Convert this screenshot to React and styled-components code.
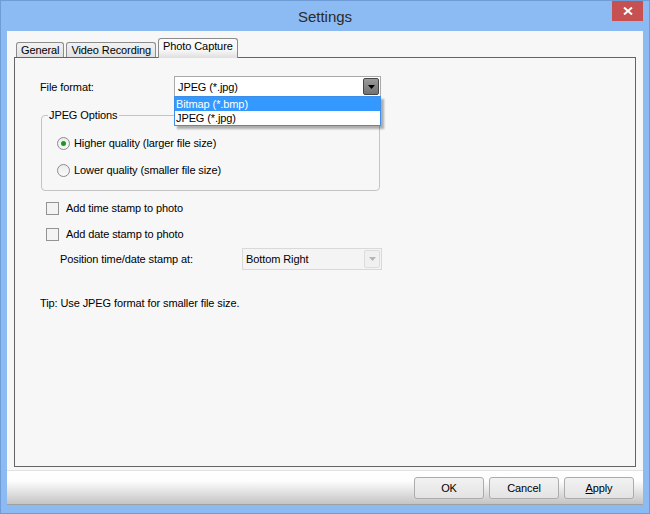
import React from 'react';
import styled, {createGlobalStyle, css} from 'styled-components';

const GlobalStyle = createGlobalStyle`
    html, body {
        margin: 0;
        padding: 0;
        background: #8cbaf3;
    }
    body {
        font-family: "Liberation Sans", Arial, sans-serif;
        font-size: 11px;
        letter-spacing: -0.1px;
        color: #000;
    }
    * {
        box-sizing: border-box;
    }
`

const Window = styled.div`
    width: 650px;
    height: 514px;
    display: flex;
    flex-direction: column;
    background: #8cbaf3;
    border: 1px solid #6f9bd6;
    padding: 0 6px 8px 6px;
    overflow: hidden;
`

const TitleBar = styled.div`
    height: 30px;
    display: grid;
    grid-template-columns: 1fr auto 1fr;
`

const Title = styled.div`
    grid-column: 2;
    align-self: center;
    font-size: 15px;
    letter-spacing: 0;
    color: #2b2b2b;
    margin-top: 1px;
`

const CloseButton = styled.div`
    grid-column: 3;
    justify-self: end;
    align-self: start;
    width: 31px;
    height: 20px;
    background: #c75050;
    display: flex;
    align-items: center;
    justify-content: center;
`

const Client = styled.div`
    flex: 1;
    display: flex;
    flex-direction: column;
    background: #f7f7f7;
`

const TabArea = styled.div`
    flex: 1;
    display: flex;
    flex-direction: column;
    padding: 7px 7px 0 7px;
`

const TabStrip = styled.div`
    height: 19px;
    display: flex;
    align-items: flex-end;
    gap: 2px;
    padding-left: 2px;
    position: relative;
    z-index: 1;
`

const Tab = styled.div`
    height: 15px;
    padding: 0 4px;
    border: 1px solid #8c8c8c;
    border-bottom: none;
    border-radius: 3px 3px 0 0;
    background: linear-gradient(#f2f2f2, #e2e2e2);
    line-height: 14px;
    white-space: nowrap;
    ${props => props.active && css`
        height: 20px;
        margin: 0 -2px -1px 0;
        padding: 0 4px;
        line-height: 15px;
        background: linear-gradient(#fbfbfb 0%, #f7f7f7 60%, #dedede 100%);
    `}
`

const Panel = styled.div`
    flex: 1;
    border: 1px solid #646464;
    background: #f7f7f7;
    padding: 18px 0 0 25px;
    display: flex;
    flex-direction: column;
    align-items: flex-start;
`

const FormatRow = styled.div`
    display: flex;
    align-items: center;
    height: 21px;
`

const Label = styled.div`
    width: ${props => props.width}px;
`

const Combo = styled.div`
    position: relative;
    width: ${props => props.width}px;
    height: ${props => props.height}px;
    border: 1px solid ${props => props.disabled ? '#d9d9d9' : '#a9a9a9'};
    background: ${props => props.disabled ? '#f4f4f4' : '#fff'};
    display: flex;
    align-items: center;
    padding-left: 3px;
`

const ComboText = styled.div`
    flex: 1;
`

const ComboArrow = styled.div`
    width: 16px;
    height: ${props => props.disabled ? 18 : 17}px;
    margin-right: 1px;
    border: 1px solid ${props => props.disabled ? '#dcdcdc' : '#474747'};
    border-radius: 2px;
    background: ${props => props.disabled
        ? '#f0f0f0'
        : 'linear-gradient(#9a9a9a, #727272)'};
    display: flex;
    align-items: center;
    justify-content: center;
`

const DropList = styled.div`
    position: absolute;
    top: 100%;
    left: -1px;
    width: 207px;
    border: 1px solid #3d8ee6;
    background: #fff;
    box-shadow: 3px 3px 2px rgba(0, 0, 0, 0.3);
    z-index: 2;
`

const DropItem = styled.div`
    height: 14px;
    line-height: 14px;
    padding-left: 1px;
    ${props => props.selected && css`
        background: #3399ff;
        color: #fff;
    `}
`

const Group = styled.fieldset`
    margin: 11px 0 0 1px;
    padding: 0;
    width: 339px;
    border: 1px solid #c4c4c4;
    border-radius: 4px;
    min-inline-size: 0;
`

const Legend = styled.legend`
    margin-left: 6px;
    padding: 0 1px;
    line-height: 15px;
`

const RadioList = styled.div`
    display: flex;
    flex-direction: column;
    gap: 7px;
    padding: 10px 0 10px 15px;
`

const OptionRow = styled.div`
    display: flex;
    align-items: center;
    height: 20px;
    gap: ${props => props.gap}px;
    margin: ${props => props.margin || '0'};
`

const Radio = styled.div`
    width: 13px;
    height: 13px;
    border-radius: 50%;
    border: 1px solid #8b8b8b;
    background: linear-gradient(#ececec, #fafafa);
    display: flex;
    align-items: center;
    justify-content: center;
    &::after {
        content: '';
        width: 5px;
        height: 5px;
        border-radius: 50%;
        background: ${props => props.checked ? '#1b9a1b' : 'transparent'};
    }
`

const Checkbox = styled.div`
    width: 13px;
    height: 13px;
    border: 1px solid #939393;
    background: #f3f3f3;
`

const PositionRow = styled.div`
    display: flex;
    align-items: center;
    margin: 4px 0 0 20px;
`

const Tip = styled.div`
    margin-top: 27px;
`

const Footer = styled.div`
    height: 35px;
    margin-top: 3px;
    border-top: 1px solid #e2e2e2;
    border-bottom: 1px solid #a0a0a0;
    background: linear-gradient(#ffffff 0%, #fdfdfd 30%, #c4c4c4 100%);
    display: flex;
    justify-content: flex-end;
    gap: 5px;
    padding: 6px 9px 0 0;
`

const Button = styled.div`
    width: 70px;
    height: 22px;
    border: 1px solid #acacac;
    border-radius: 3px;
    background: linear-gradient(#f2f2f2, #e3e3e3);
    display: flex;
    align-items: center;
    justify-content: center;
    u {
        text-decoration: underline;
    }
`

function Arrow({color}) {
    return (
        <svg width="7" height="4" viewBox="0 0 7 4">
            <path d="M0 0 H7 L3.5 4 Z" fill={color}/>
        </svg>
    )
}

export default function App() {
    return (
        <>
            <GlobalStyle/>
            <Window>
                <TitleBar>
                    <Title>Settings</Title>
                    <CloseButton>
                        <svg width="10" height="8" viewBox="0 0 10 8">
                            <path d="M1 0.5 L9 7.5 M9 0.5 L1 7.5" stroke="#fff" strokeWidth="2"/>
                        </svg>
                    </CloseButton>
                </TitleBar>
                <Client>
                    <TabArea>
                        <TabStrip>
                            <Tab>General</Tab>
                            <Tab>Video Recording</Tab>
                            <Tab active>Photo Capture</Tab>
                        </TabStrip>
                        <Panel>
                            <FormatRow>
                                <Label width={134}>File format:</Label>
                                <Combo width={207} height={21}>
                                    <ComboText>JPEG (*.jpg)</ComboText>
                                    <ComboArrow><Arrow color="#000"/></ComboArrow>
                                    <DropList>
                                        <DropItem selected>Bitmap (*.bmp)</DropItem>
                                        <DropItem>JPEG (*.jpg)</DropItem>
                                    </DropList>
                                </Combo>
                            </FormatRow>
                            <Group>
                                <Legend>JPEG Options</Legend>
                                <RadioList>
                                    <OptionRow gap={4}>
                                        <Radio checked/>
                                        <span>Higher quality (larger file size)</span>
                                    </OptionRow>
                                    <OptionRow gap={4}>
                                        <Radio/>
                                        <span>Lower quality (smaller file size)</span>
                                    </OptionRow>
                                </RadioList>
                            </Group>
                            <OptionRow gap={7} margin="7px 0 0 6px">
                                <Checkbox/>
                                <span>Add time stamp to photo</span>
                            </OptionRow>
                            <OptionRow gap={7} margin="6px 0 0 6px">
                                <Checkbox/>
                                <span>Add date stamp to photo</span>
                            </OptionRow>
                            <PositionRow>
                                <Label width={182}>Position time/date stamp at:</Label>
                                <Combo width={140} height={22} disabled>
                                    <ComboText>Bottom Right</ComboText>
                                    <ComboArrow disabled><Arrow color="#b5b5b5"/></ComboArrow>
                                </Combo>
                            </PositionRow>
                            <Tip>Tip: Use JPEG format for smaller file size.</Tip>
                        </Panel>
                    </TabArea>
                    <Footer>
                        <Button>OK</Button>
                        <Button>Cancel</Button>
                        <Button><span><u>A</u>pply</span></Button>
                    </Footer>
                </Client>
            </Window>
        </>
    )
}
